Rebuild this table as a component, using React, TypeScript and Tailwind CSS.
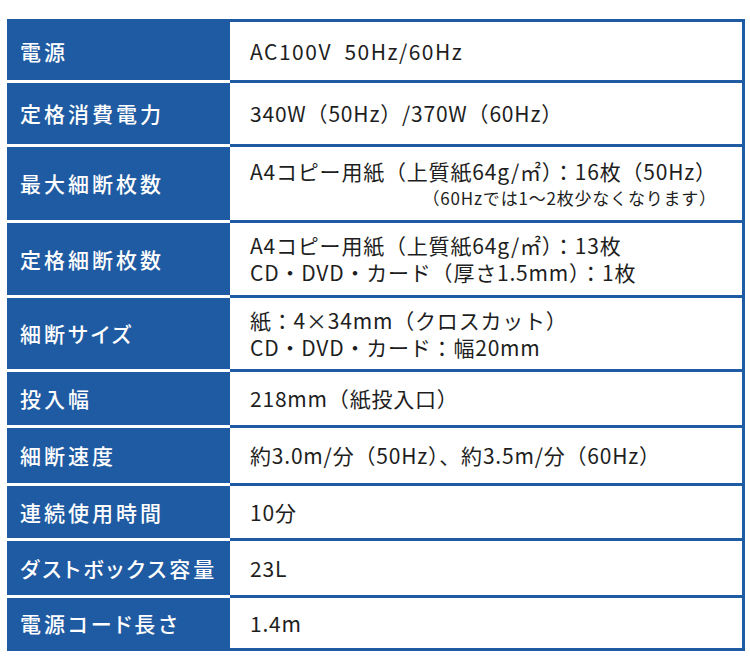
import React from 'react';

interface SpecRow {
  label: string;
  height: number;
  value: React.ReactNode;
}

const rows: SpecRow[] = [
  { label: '電源', height: 58, value: <span className="tracking-[1.5px]">AC100V&nbsp;&nbsp;50Hz/60Hz</span> },
  { label: '定格消費電力', height: 61, value: '340W（50Hz）/370W（60Hz）' },
  {
    label: '最大細断枚数',
    height: 73,
    value: (
      <div className="w-fit">
        <div>A4コピー用紙（上質紙64g/㎡）：16枚（50Hz）</div>
        <div className="text-right text-[17px] leading-[25px]">（60Hzでは1～2枚少なくなります）</div>
      </div>
    ),
  },
  {
    label: '定格細断枚数',
    height: 72,
    value: (
      <div>
        <div>A4コピー用紙（上質紙64g/㎡）：13枚</div>
        <div>CD・DVD・カード（厚さ1.5mm）：1枚</div>
      </div>
    ),
  },
  {
    label: '細断サイズ',
    height: 71,
    value: (
      <div>
        <div>紙：4×34mm（クロスカット）</div>
        <div>CD・DVD・カード：幅20mm</div>
      </div>
    ),
  },
  { label: '投入幅', height: 53, value: '218mm（紙投入口）' },
  { label: '細断速度', height: 55, value: '約3.0m/分（50Hz）、約3.5m/分（60Hz）' },
  { label: '連続使用時間', height: 52, value: '10分' },
  { label: 'ダストボックス容量', height: 54, value: '23L' },
  { label: '電源コード長さ', height: 50, value: '1.4m' },
];

export default function App() {
  return (
    <div
      className="w-[750px] h-[667px] bg-white pt-[19px] pl-[7px]"
      style={{ fontFamily: '"Noto Sans CJK JP", "Noto Sans", sans-serif' }}
    >
      <div className="w-[738px]">
        {rows.map((row, i) => {
          const first = i === 0;
          const last = i === rows.length - 1;
          return (
            <div key={row.label} className="flex">
              <div
                className={`w-[223px] shrink-0 bg-[#1f5ba2] flex items-center pl-[13px] border-t-[3px] ${
                  first ? 'border-[#1f5ba2]' : 'border-white'
                } ${last ? 'border-b-[3px] border-b-[#1f5ba2]' : ''}`}
              >
                <div
                  className="text-white text-[21px] font-medium tracking-[3px] whitespace-nowrap [font-feature-settings:'palt']"
                  style={{ height: row.height, lineHeight: `${row.height}px` }}
                >
                  {row.label}
                </div>
              </div>
              <div
                className={`flex-1 flex items-center pl-[20px] border-t-[3px] border-r-[3px] border-[#1f5ba2] text-[#1e1e1e] text-[21px] tracking-[0.8px] leading-[27px] whitespace-nowrap ${
                  last ? 'border-b-[3px]' : ''
                }`}
                style={{ height: row.height + 3 + (last ? 3 : 0) }}
              >
                {row.value}
              </div>
            </div>
          );
        })}
      </div>
    </div>
  );
}
